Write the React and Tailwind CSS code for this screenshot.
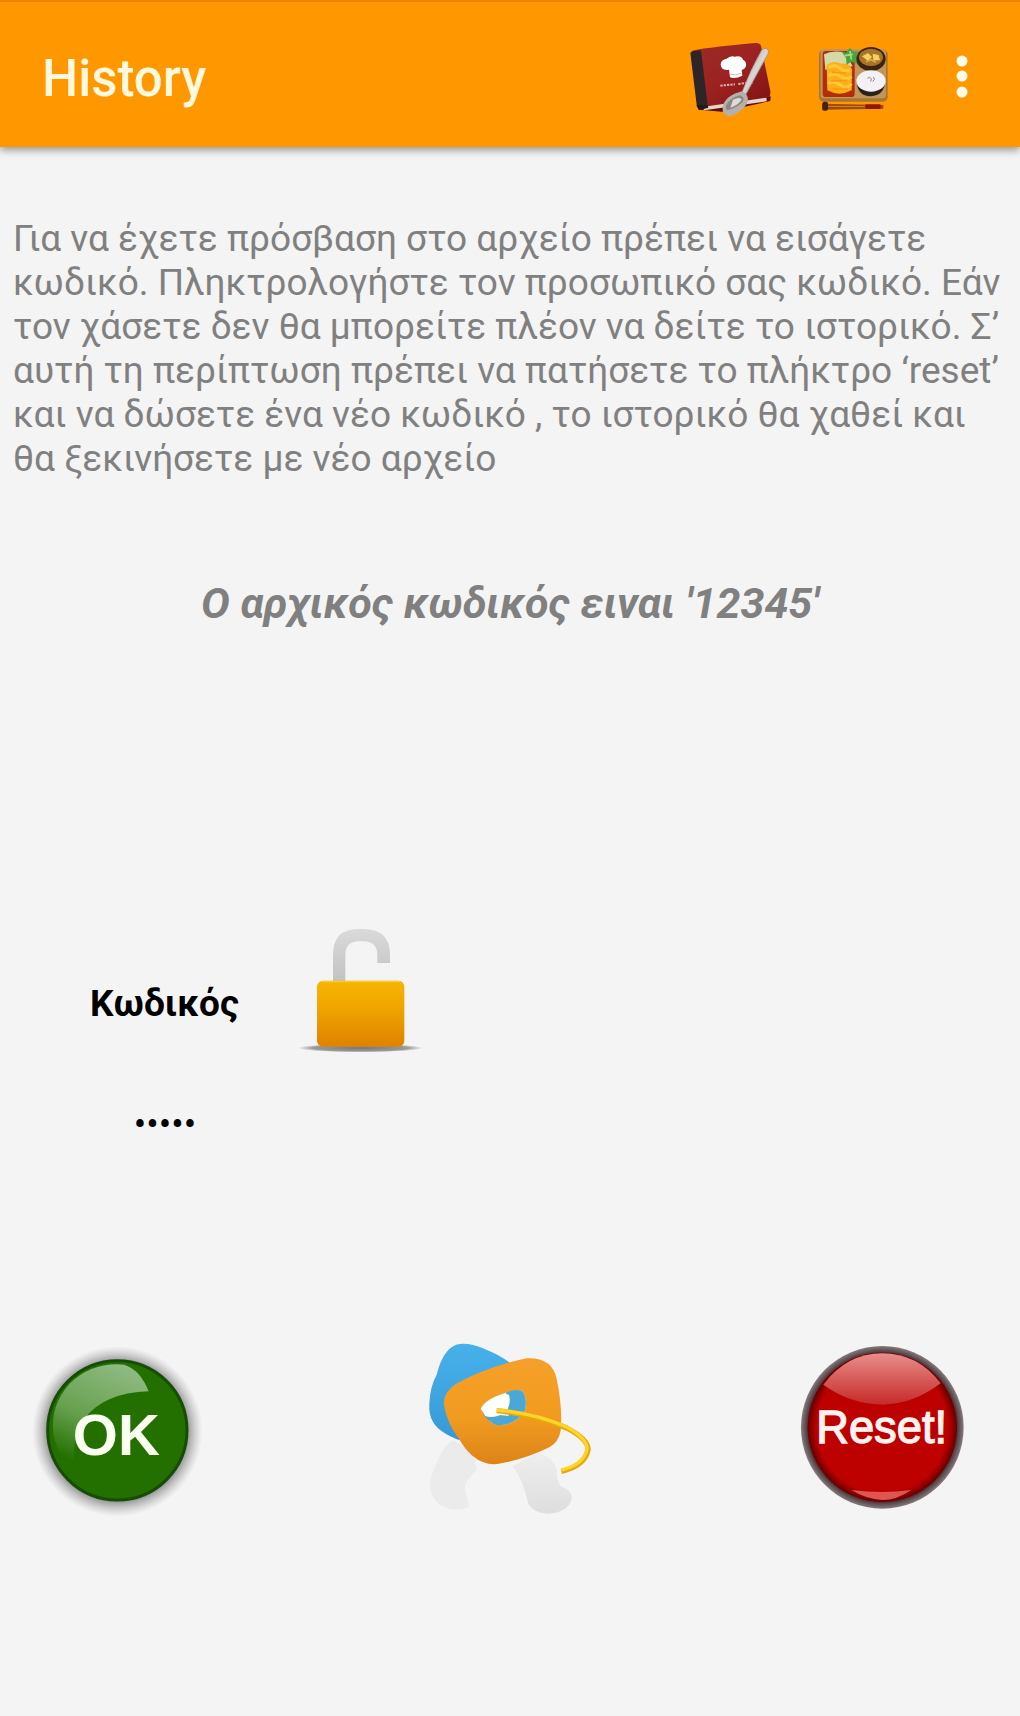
import { useState } from "react";

function BookIcon() {
  return (
    <svg viewBox="40 50 270 240" className="w-[90px] h-20" aria-hidden="true">
      <defs>
        <linearGradient id="cover" x1="0" y1="0" x2="1" y2="1">
          <stop offset="0" stopColor="#9a2c28" />
          <stop offset="0.5" stopColor="#9c2221" />
          <stop offset="1" stopColor="#7d1212" />
        </linearGradient>
        <linearGradient id="spoon" x1="0" y1="0" x2="1" y2="1">
          <stop offset="0" stopColor="#8d8583" />
          <stop offset="0.5" stopColor="#dcd6d4" />
          <stop offset="1" stopColor="#77706e" />
        </linearGradient>
      </defs>
      <path d="M82 262 L150 268 L296 236 L297 222 L90 240Z" fill="#5c0f10" />
      <path d="M88 252 L284 224 L285 237 L98 264Z" fill="#e5d3cc" />
      <path d="M60 86 Q80 78 250 62 Q264 60 268 70 L296 206 Q298 224 284 226 L92 254 Q80 254 76 240Z" fill="url(#cover)" />
      <path d="M56 92 Q58 86 88 84 L108 250 L82 262 Q76 258 74 240Z" fill="#2e2526" />
      <path d="M74 248 L108 248 L110 256 L82 264Z" fill="#211a1c" />
      <path d="M175 165 L172 142 Q150 146 147 128 Q147 111 165 109 Q176 98 190 103 Q208 99 214 112 Q227 119 222 134 Q217 143 210 143 L212 160 Q192 170 175 165Z" fill="#fff" />
      <path d="M176 156 Q192 161 208 153" stroke="#d8b9b4" strokeWidth="3" fill="none" />
      <path d="M146 190 L190 186 M200 185 L243 180" stroke="#e3aaa5" strokeWidth="6" strokeDasharray="7 3" />
      <path d="M270 83 Q282 72 290 85 Q292 93 284 104 L223 216 L210 212 Q236 142 270 83Z" fill="url(#spoon)" stroke="#9a8582" strokeWidth="2" />
      <path d="M211 207 L223 214 Q236 234 220 252 Q196 280 172 282 Q150 276 153 254 Q160 220 211 207Z" fill="#b5b0ae" stroke="#85797700" strokeWidth="3" />
      <path d="M205 219 Q222 226 212 240 Q194 258 166 264 Q158 254 168 241 Q182 224 205 219Z" fill="#8d8785" />
      <path d="M184 232 Q206 222 210 232 Q200 248 176 256Z" fill="#dedbd9" />
    </svg>
  );
}

function BentoIcon() {
  return (
    <svg viewBox="45 65 225 210" className="w-[75px] h-[70px]" aria-hidden="true">
      <rect x="57" y="82" width="206" height="156" rx="14" fill="#a97632" />
      <rect x="62" y="80" width="196" height="148" rx="10" fill="#c0965a" />
      <rect x="68" y="86" width="96" height="138" rx="10" fill="#b22d08" />
      <path d="M72 96 Q100 82 136 92 L158 132 L76 142Z" fill="#d4d9a8" />
      <path d="M80 128 Q100 112 124 124 Q148 122 156 140 L155 204 Q118 224 82 204Z" fill="#ffad16" />
      <path d="M86 136 Q104 124 120 138 T150 142 M84 160 Q102 148 122 162 T154 162 M84 184 Q104 172 122 188 T154 184" stroke="#ffc938" strokeWidth="10" fill="none" />
      <path d="M96 150 L140 152 M92 176 L142 174 M98 200 L144 200" stroke="#ff960f" strokeWidth="5" />
      <path d="M124 86 L138 92 L150 76 L160 88 L174 86 L168 108 L172 124 L152 118 L140 128 L138 108Z" fill="#49a43c" />
      <path d="M134 100 L158 96 M150 86 L154 112" stroke="#a6dc83" strokeWidth="5" />
      <ellipse cx="213" cy="110" rx="44" ry="36" fill="#3d2411" />
      <ellipse cx="213" cy="105" rx="36" ry="26" fill="#a87428" />
      <path d="M186 102 L204 92 L216 104 L204 116Z M218 94 L236 98 L240 114 L220 114Z" fill="#f4cf62" />
      <path d="M198 118 L214 112 L228 120" stroke="#e4a638" strokeWidth="5" fill="none" />
      <path d="M170 176 Q172 222 212 222 Q254 220 256 174Z" fill="#29221d" />
      <ellipse cx="213" cy="176" rx="44" ry="32" fill="#f4f1f4" />
      <path d="M202 168 Q210 160 214 170 L212 178 M220 164 Q228 170 218 178" stroke="#8c8c8c" strokeWidth="3" fill="none" />
      <path d="M66 244 L250 248 L250 259 L66 262Z" fill="#9b4a12" />
      <path d="M84 252 L196 253" stroke="#d88424" strokeWidth="3" />
      <rect x="196" y="246" width="46" height="14" rx="3" fill="#8e1609" />
      <rect x="67" y="238" width="17" height="27" rx="6" fill="#45200b" />
    </svg>
  );
}

function LockIcon() {
  return (
    <svg viewBox="45 45 390 465" className="w-[130px] h-[155px]" aria-hidden="true">
      <defs>
        <linearGradient id="lockBody" x1="0" y1="0" x2="0" y2="1">
          <stop offset="0" stopColor="#f7b500" />
          <stop offset="0.4" stopColor="#f0a500" />
          <stop offset="1" stopColor="#de8200" />
        </linearGradient>
        <linearGradient id="shackle" x1="0" y1="0" x2="0" y2="1">
          <stop offset="0" stopColor="#dadada" />
          <stop offset="1" stopColor="#c2c2c2" />
        </linearGradient>
        <radialGradient id="lockShadow">
          <stop offset="0" stopColor="#777" />
          <stop offset="0.75" stopColor="#999" />
          <stop offset="1" stopColor="#999" stopOpacity="0" />
        </radialGradient>
      </defs>
      <ellipse cx="241" cy="411" rx="188" ry="13" fill="url(#lockShadow)" />
      <path d="M159 212 V132 Q159 54 235 54 H250 Q330 54 330 132 V156 H292 V133 Q292 91 250 91 H237 Q196 91 196 133 V212Z" fill="url(#shackle)" />
      <rect x="111" y="209" width="262" height="198" rx="18" fill="url(#lockBody)" />
      <path d="M124 212 H360" stroke="#ffc928" strokeWidth="4" />
    </svg>
  );
}

function OkIcon() {
  return (
    <svg viewBox="0 -30 600 630" className="w-[200px] h-[210px]">
      <defs>
        <radialGradient id="okShadow">
          <stop offset="0.82" stopColor="#777" stopOpacity="0.75" />
          <stop offset="1" stopColor="#aaa" stopOpacity="0" />
        </radialGradient>
        <linearGradient id="okGloss" x1="0.7" y1="0" x2="0.3" y2="1">
          <stop offset="0" stopColor="#8fba82" />
          <stop offset="0.55" stopColor="#66a04e" />
          <stop offset="0.95" stopColor="#237000" />
        </linearGradient>
      </defs>
      <circle cx="292" cy="304" r="256" fill="url(#okShadow)" />
      <circle cx="292" cy="301" r="209" fill="#237000" stroke="#174c06" strokeWidth="9" />
      <path d="M386 184 Q360 118 312 104 Q216 96 150 160 Q90 226 100 310 Q112 380 160 424 Q156 330 190 270 Q250 188 386 184Z" fill="url(#okGloss)" />
      <text x="289" y="375" textAnchor="middle" fontSize="174" fontWeight="700" fill="#fafff0" className="font-['Liberation_Sans',sans-serif]">
        OK
      </text>
    </svg>
  );
}

function KeyIcon() {
  return (
    <svg viewBox="-30 0 600 630" className="w-[200px] h-[210px]" aria-hidden="true">
      <defs>
        <linearGradient id="keyOrange" x1="0" y1="0" x2="0" y2="1">
          <stop offset="0" stopColor="#f5a02a" />
          <stop offset="0.55" stopColor="#f29b20" />
          <stop offset="1" stopColor="#dc8418" />
        </linearGradient>
        <linearGradient id="keyBlue" x1="0" y1="0" x2="0" y2="1">
          <stop offset="0" stopColor="#47b1ea" />
          <stop offset="1" stopColor="#3899d6" />
        </linearGradient>
        <linearGradient id="keyBlade" x1="0" y1="0" x2="0" y2="1">
          <stop offset="0" stopColor="#eeeeee" />
          <stop offset="1" stopColor="#dedede" />
        </linearGradient>
      </defs>
      <path d="M104 380 Q60 460 60 500 Q66 548 112 565 Q150 574 177 560 L164 505 Q166 480 200 450 L190 400 L130 360Z" fill="#ebebeb" />
      <path d="M308 438 L382 398 Q428 410 440 446 Q440 485 452 498 Q484 510 486 532 Q478 576 418 581 Q374 582 355 552 Q340 480 308 438Z" fill="url(#keyBlade)" />
      <path d="M146 360 Q84 336 68 304 Q56 284 58 250 Q60 200 80 164 Q98 90 138 74 Q172 64 222 86 Q268 104 300 128 L240 300Z" fill="url(#keyBlue)" />
      <path fillRule="evenodd" d="M102 256 Q98 220 136 193 Q230 140 350 115 Q428 112 440 178 Q458 260 452 332 Q446 366 418 382 Q340 420 262 432 Q222 436 188 408 Q164 388 146 355 Q112 312 102 256Z M214 266 Q220 292 254 314 Q302 322 342 280 Q356 238 336 212 Q300 208 260 230 Q222 244 214 266Z" fill="url(#keyOrange)" />
      <path d="M220 280 L296 288 L288 218 Q310 206 336 212 Q356 238 342 280 Q302 322 254 314 Q228 298 220 280Z" fill="#49a8d8" />
      <path d="M212 266 Q222 244 260 228 Q282 218 297 224 Q304 252 288 276 Q252 298 226 288Z" fill="#fff" />
      <path d="M260 272 Q380 284 470 324 Q536 358 534 390 Q524 438 454 454" fill="none" stroke="#e3aa0c" strokeWidth="16" />
      <path d="M260 270 Q380 281 470 321 Q533 356 531 388 Q521 434 454 450" fill="none" stroke="#ffd42a" strokeWidth="10" />
    </svg>
  );
}

function ResetIcon() {
  return (
    <svg viewBox="0 0 630 630" className="w-[210px] h-[210px]">
      <defs>
        <radialGradient id="resetRim">
          <stop offset="0.88" stopColor="#2a0b0d" />
          <stop offset="0.94" stopColor="#5b4a4d" />
          <stop offset="1" stopColor="#857b7d" />
        </radialGradient>
        <radialGradient id="resetBody">
          <stop offset="0.88" stopColor="#bd0000" />
          <stop offset="1" stopColor="#680000" />
        </radialGradient>
        <linearGradient id="resetGloss" x1="0" y1="0" x2="0" y2="1">
          <stop offset="0" stopColor="#e88d8b" />
          <stop offset="1" stopColor="#c62a28" />
        </linearGradient>
      </defs>
      <circle cx="307" cy="322" r="244" fill="url(#resetRim)" />
      <circle cx="307" cy="322" r="224" fill="url(#resetBody)" />
      <path d="M130 194 Q200 100 307 100 Q414 100 482 190 Q400 252 310 254 Q210 252 130 194Z" fill="url(#resetGloss)" />
      <path d="M214 510 Q307 522 394 510 Q350 540 307 540 Q260 538 214 510Z" fill="#df5553" />
      <text x="305" y="368" textAnchor="middle" fontSize="136" fill="#fff2ee" stroke="#fff2ee" strokeWidth="4" className="font-['Liberation_Sans',sans-serif]">
        Reset!
      </text>
    </svg>
  );
}

export default function App() {
  const [code, setCode] = useState("12345");

  return (
    <div className="min-h-screen bg-[#f4f4f4] font-[Roboto,sans-serif]">
      <header className="flex items-center justify-between h-[147px] pt-2 pl-[42px] pr-10 bg-[#ff9800] border-t-2 border-[#ee8400] shadow-[0_3px_8px_rgba(0,0,0,0.4)]">
        <h1 className="text-[51px] leading-none font-medium text-[#fff8dc]">
          History
        </h1>
        <div className="flex items-center">
          <button type="button" aria-label="Recipes" className="mr-10">
            <BookIcon />
          </button>
          <button type="button" aria-label="Meals" className="mr-[54px]">
            <BentoIcon />
          </button>
          <button type="button" aria-label="More options">
            <svg viewBox="0 0 36 60" className="w-9 h-[60px]" fill="#fffbea" aria-hidden="true">
              <circle cx="18" cy="12" r="5.5" />
              <circle cx="18" cy="27" r="5.5" />
              <circle cx="18" cy="43" r="5.5" />
            </svg>
          </button>
        </div>
      </header>

      <main className="pt-[70px]">
        <p className="px-[13px] text-[37px] leading-[44px] text-[#808080]">
          Για να έχετε πρόσβαση στο αρχείο πρέπει να εισάγετε κωδικό.
          Πληκτρολογήστε τον προσωπικό σας κωδικό. Εάν τον χάσετε δεν θα
          μπορείτε πλέον να δείτε το ιστορικό. Σ’ αυτή τη περίπτωση πρέπει να
          πατήσετε το πλήκτρο ‘reset’ και να δώσετε ένα νέο κωδικό , το ιστορικό
          θα χαθεί και θα ξεκινήσετε με νέο αρχείο
        </p>

        <p className="mt-24 text-center text-[43px] leading-[52px] font-bold italic text-[#808080]">
          Ο αρχικός κωδικός ειναι '12345'
        </p>

        <div className="flex items-center gap-14 mt-[297px] pl-[90px]">
          <label htmlFor="code" className="text-[37px] leading-[44px] font-bold text-black">
            Κωδικός
          </label>
          <LockIcon />
        </div>
        <input
          id="code"
          type="password"
          value={code}
          onChange={(e) => setCode(e.target.value)}
          className="block w-[150px] h-[86px] ml-[90px] bg-transparent text-center text-[37px] text-black outline-none"
        />

        <div className="flex items-start justify-between mt-[153px] pl-5 pr-[30px]">
          <button type="button">
            <OkIcon />
          </button>
          <button type="button" aria-label="Change code">
            <KeyIcon />
          </button>
          <button type="button">
            <ResetIcon />
          </button>
        </div>
      </main>
    </div>
  );
}
